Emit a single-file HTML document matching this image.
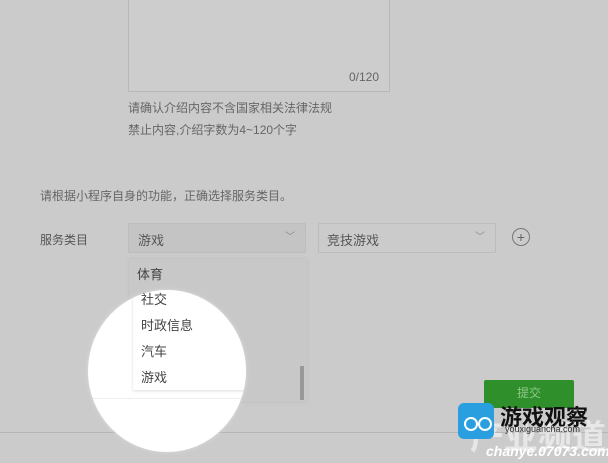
<!DOCTYPE html>
<html><head><meta charset="utf-8"><style>
body{margin:0;width:608px;height:463px;background:#cbcbcb;position:relative;overflow:hidden;font-family:"Liberation Sans","Noto Sans CJK SC",sans-serif;font-size:12px;color:#555}
.a{position:absolute;white-space:nowrap}
</style></head><body>
<div class="a" style="left:128px;top:-2px;width:260px;height:92px;border:1px solid #b8b8b8;background:#cdcdcd"></div>
<div class="a" style="left:349px;top:70px;color:#666">0/120</div>
<div class="a" style="left:128px;top:99px;color:#666">请确认介绍内容不含国家相关法律法规</div>
<div class="a" style="left:128px;top:121px;color:#666">禁止内容,介绍字数为4~120个字</div>
<div class="a" style="left:40px;top:187px;color:#666">请根据小程序自身的功能，正确选择服务类目。</div>
<div class="a" style="left:40px;top:231px;color:#555">服务类目</div>
<div class="a" style="left:128px;top:223px;width:176px;height:28px;background:#c4c4c4;border:1px solid #bcbcbc;border-radius:2px"></div>
<div class="a" style="left:138px;top:230px;color:#555;font-size:13px">游戏</div>
<div class="a" style="left:285px;top:228px;color:#888;font-size:10px">﹀</div>
<div class="a" style="left:318px;top:223px;width:176px;height:28px;border:1px solid #bcbcbc;border-radius:2px"></div>
<div class="a" style="left:327px;top:230px;color:#555;font-size:13px">竞技游戏</div>
<div class="a" style="left:475px;top:228px;color:#888;font-size:10px">﹀</div>
<div class="a" style="left:512px;top:228px;width:16px;height:16px;border:1px solid #777;border-radius:50%;text-align:center;line-height:16px;font-size:14px;color:#666">+</div>
<div class="a" style="left:129px;top:259px;width:178px;height:143px;background:#c8c8c8;box-shadow:0 0 3px #bbb"></div>
<div class="a" style="left:300px;top:366px;width:4px;height:34px;background:#999"></div>
<div class="a" style="left:0;top:432px;width:608px;height:1px;background:#b5b5b5"></div>
<div class="a" style="left:88px;top:290px;width:158px;height:162px;border-radius:50%;background:#fff;box-shadow:0 0 4px #ddd;overflow:hidden">
 <div class="a" style="left:0;top:108px;width:158px;height:1px;background:#eee"></div>
 <div class="a" style="left:45px;top:-4px;width:170px;height:104px;background:#fff;box-shadow:0 1px 3px #ddd"></div>
</div>
<div class="a" style="left:137px;top:264px;color:#444;font-size:13px">体育</div>
<div class="a" style="left:141px;top:289px;color:#444;font-size:13px">社交</div>
<div class="a" style="left:141px;top:315px;color:#444;font-size:13px">时政信息</div>
<div class="a" style="left:141px;top:341px;color:#444;font-size:13px">汽车</div>
<div class="a" style="left:141px;top:367px;color:#444;font-size:13px">游戏</div>
<div class="a" style="left:484px;top:380px;width:90px;height:28px;background:#2f8f2a;border-radius:2px;color:#8fc88a;text-align:center;line-height:26px">提交</div>
<div class="a" style="left:470px;top:410px;font-size:34px;font-weight:bold;color:rgba(255,255,255,.55);letter-spacing:0">产业频道</div>
<div class="a" style="left:458px;top:403px;width:36px;height:36px;background:#2a9fe0;border-radius:6px"></div>
<div class="a" style="left:464px;top:417px;width:10px;height:10px;border:2px solid #fff;border-radius:50%"></div>
<div class="a" style="left:478px;top:417px;width:10px;height:10px;border:2px solid #fff;border-radius:50%"></div>
<div class="a" style="left:500px;top:400px;font-size:22px;font-weight:bold;color:#111">游戏观察</div>
<div class="a" style="left:505px;top:424px;font-size:9px;color:#333">youxiguancha.com</div>
<div class="a" style="left:486px;top:443px;font-size:14px;font-style:italic;color:#fff;font-weight:bold">chanye.07073.com</div>
</body></html>
